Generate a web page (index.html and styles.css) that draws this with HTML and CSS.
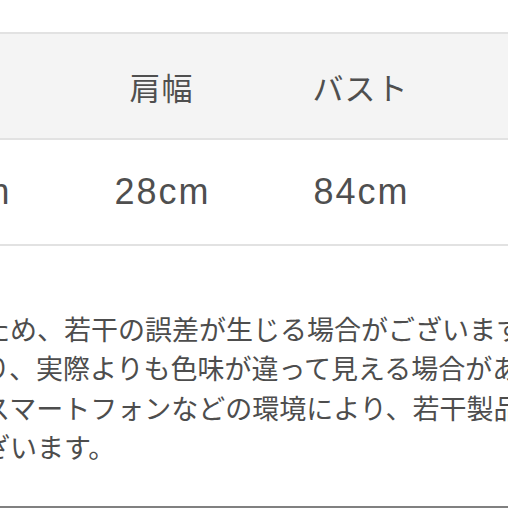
FILE: index.html
```html
<!DOCTYPE html>
<html lang="ja">
<head>
<meta charset="utf-8">
<title>サイズ</title>
<link rel="stylesheet" href="styles.css">
</head>
<body>
<div class="page">
  <div class="size-table">
    <div class="row head">
      <div class="cell"></div>
      <div class="cell">肩幅</div>
      <div class="cell">バスト</div>
      <div class="cell"></div>
    </div>
    <div class="row body-row">
      <div class="cell num">64cm</div>
      <div class="cell num">28cm</div>
      <div class="cell num">84cm</div>
      <div class="cell num"></div>
    </div>
  </div>
  <div class="note">
    <div class="line">ため、若干の誤差が生じる場合がございます</div>
    <div class="line">り、実際よりも色味が違って見える場合があ</div>
    <div class="line">スマートフォンなどの環境により、若干製品</div>
    <div class="line">ざいます。</div>
  </div>
  <div class="rule"></div>
</div>
</body>
</html>
```

FILE: styles.css
```css
html, body {
  margin: 0;
  padding: 0;
  background: #ffffff;
}
body {
  width: 508px;
  height: 508px;
  overflow: hidden;
  font-family: "Noto Sans CJK JP", "Noto Sans", sans-serif;
  color: #555555;
}
.page {
  display: flex;
  flex-direction: column;
  height: 508px;
}
.size-table {
  margin-top: 32px;
  margin-left: -137px;
  width: 796px;
  border-top: 2px solid #e2e2e2;
  flex-shrink: 0;
}
.row {
  display: grid;
  grid-template-columns: repeat(4, 199px);
  height: 104px;
  align-items: center;
  text-align: center;
  border-bottom: 2px solid #e2e2e2;
}
.head {
  background: #f4f4f4;
  font-size: 31px;
  letter-spacing: 1px;
  color: #4f4f4f;
}
.body-row {
  background: #ffffff;
}
.num {
  font-family: "Liberation Sans", Arial, sans-serif;
  font-size: 36px;
  letter-spacing: 2px;
  color: #4f4f4f;
  padding-left: 2px;
}
.note {
  margin-top: 63px;
  margin-left: -17px;
  font-size: 27px;
  line-height: 39.3px;
  white-space: nowrap;
  color: #4d4d4d;
}
.rule {
  margin-top: auto;
  border-top: 2px solid #808080;
  height: 0;
}
```
